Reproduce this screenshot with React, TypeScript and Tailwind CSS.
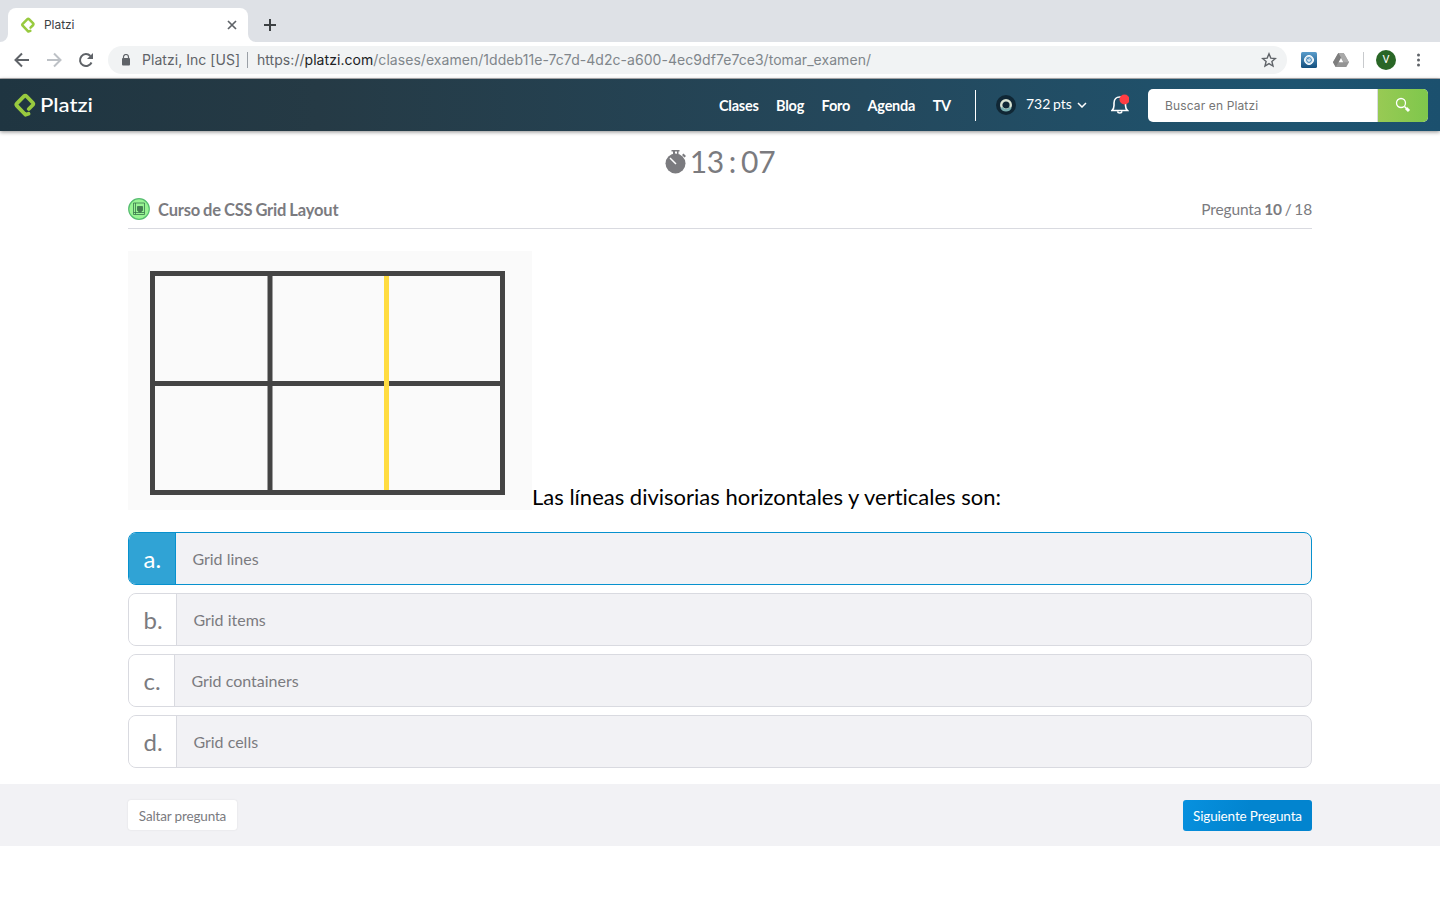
import type { ReactNode } from 'react';

const Mark = ({ className }: { className: string }) => (
  <svg viewBox="0 0 22 24" className={className} fill="none" stroke="#98ca3f" strokeWidth="3.800" strokeLinecap="round" strokeLinejoin="round">
    <path d="M14.800 16 18.800 12Q19.800 10.800 18.800 9.700L12.500 3.200Q11.300 2 10.100 3.200L2.700 10.700Q1.900 11.600 2.700 12.600L11.500 21.800 14.500 20.800" />
  </svg>
);

const answers = [
  { key: 'a', text: 'Grid lines', box: 'w-[47px]', selected: true },
  { key: 'b', text: 'Grid items', box: 'w-[48px]', selected: false },
  { key: 'c', text: 'Grid containers', box: 'w-[46px]', selected: false },
  { key: 'd', text: 'Grid cells', box: 'w-[48px]', selected: false },
];

function NavItem({ children }: { children: ReactNode }) {
  return <a className="whitespace-nowrap">{children}</a>;
}

function Browser() {
  return (
    <header className="h-[79px] border-b border-[#b5b3b6] bg-white font-[Inter,sans-serif]">
      <div className="flex h-[42px] bg-[#dee1e6] pl-2 pt-2">
        <div className="relative flex h-[34px] w-60 items-center rounded-t-lg bg-white pl-3 pr-2.5">
          <svg viewBox="0 0 8 8" className="absolute -left-2 bottom-0 size-2" fill="white"><path d="M8 0v8H0a8 8 0 0 0 8-8" /></svg>
          <svg viewBox="0 0 8 8" className="absolute -right-2 bottom-0 size-2" fill="white"><path d="M0 0v8h8a8 8 0 0 1-8-8" /></svg>
          <Mark className="h-4 w-4" />
          <span className="ml-2 flex-1 text-[12px] tracking-[-0.05px] text-[#3c4043]">Platzi</span>
          <svg viewBox="0 0 12 12" className="size-3" stroke="#5f6368" strokeWidth="1.7"><path d="m2 2 8 8M10 2 2 10" /></svg>
        </div>
        <svg viewBox="0 0 14 14" className="ml-[15px] mt-2.5 size-3.5" stroke="#3c4043" strokeWidth="2"><path d="M7 1v12M1 7h12" /></svg>
      </div>
      <div className="flex h-9 items-center pl-3.5">
        <svg viewBox="0 0 16 16" className="size-4" fill="none" stroke="#5f6368" strokeWidth="2"><path d="M15 8H2M8 1.500 1.500 8 8 14.500" /></svg>
        <svg viewBox="0 0 16 16" className="ml-4 size-4" fill="none" stroke="#bdc1c6" strokeWidth="2"><path d="M1 8h13M8 1.500 14.500 8 8 14.500" /></svg>
        <svg viewBox="0 0 16 16" className="ml-4 size-4" fill="none" stroke="#5f6368" strokeWidth="2"><path d="M13.500 10.500A6 6 0 1 1 12.400 4" /><path d="M15 1v6H9z" fill="#5f6368" stroke="none" /></svg>
        <div className="ml-3.5 flex h-7 w-[1179px] items-center rounded-full bg-[#f1f3f4] pl-[13px] text-[14px]">
          <svg viewBox="0 0 10 12" className="h-3 w-2.5"><path d="M2.500 5V3a2.500 2.500 0 0 1 5 0v2" fill="none" stroke="#5f6368" strokeWidth="1.200" /><rect x="1" y="4" width="8" height="7.500" rx="1" fill="#5f6368" /></svg>
          <svg viewBox="0 0 105 20" className="ml-[11px] h-5 w-[105px]"><text y="15" textLength="98" fontSize="14" fill="#5f6368">Platzi, Inc [US]</text></svg>
          <span className="h-4 w-px bg-[#9aa0a6]" />
          <svg viewBox="0 0 640 20" className="ml-[9px] h-5 w-[640px]"><text y="15" textLength="614" fontSize="14" fill="#80868b"><tspan fill="#5f6368">https://</tspan><tspan fill="#202124">platzi.com</tspan>/clases/examen/1ddeb11e-7c7d-4d2c-a600-4ec9df7e7ce3/tomar_examen/</text></svg>
          <svg viewBox="0 0 16 16" className="ml-auto mr-2.5 size-4" fill="none" stroke="#5f6368" strokeWidth="1.400"><path d="m8 1.800 1.800 4.300 4.600.400-3.500 3 1.100 4.600-4-2.500-4 2.500 1.100-4.600-3.500-3 4.600-.400z" /></svg>
        </div>
        <svg viewBox="0 0 16 16" className="ml-3.5 size-4"><defs><linearGradient id="ext" x2="0" y2="1"><stop stopColor="#5a9dcc" /><stop offset="1" stopColor="#134f7e" /></linearGradient></defs><rect width="16" height="16" rx="1.500" fill="url(#ext)" /><circle cx="8" cy="8" r="4.500" fill="#d9e9f4" stroke="#fff" /><circle cx="8" cy="8" r="2.400" fill="none" stroke="#2d78b0" strokeWidth=".9" /><path d="m6 5.500 2 2" stroke="#2d78b0" /></svg>
        <svg viewBox="0 0 16 14" className="ml-4 h-3.5 w-4"><path d="M5.300 0h5.400L16 9.200l-2.700 4.800H2.700L0 9.200z" fill="#949494" /><path d="M10.700 0 16 9.200h-5.200L5.300 0z" fill="#a9a9a9" /><path d="m5.300 0-5.300 9.200L2.700 14 8 4.700z" fill="#7d7d7d" /><path d="m8 5 2.300 4.200H5.700z" fill="#fff" /></svg>
        <span className="ml-[14px] h-4 w-px bg-[#c8cacd]" />
        <span className="ml-3 flex size-5 items-center justify-center rounded-full bg-[#296626] font-[Roboto,sans-serif] text-[11px] text-white">V</span>
        <svg viewBox="0 0 4 14" className="ml-5 h-3.5 w-1" fill="#5f6368"><circle cx="2.500" cy="2" r="1.500" /><circle cx="2.500" cy="7" r="1.500" /><circle cx="2.500" cy="12" r="1.500" /></svg>
      </div>
    </header>
  );
}

function Navbar() {
  return (
    <nav className="relative flex h-[52px] items-center bg-[linear-gradient(90deg,#1f3541_0%,#253a45_22%,#24485c_60%,#1e5470_90%,#1b506e_100%)] pl-3.5 text-white shadow-[0_1px_4px_rgba(0,0,0,0.45)]">
      <Mark className="h-6 w-[22px]" />
      <svg viewBox="0 0 54 24" className="ml-1 h-6 w-[54px]"><text x="0" y="19" textLength="53" lengthAdjust="spacingAndGlyphs" fill="white" fontFamily="Lato, sans-serif" fontWeight="500" fontSize="20">Platzi</text></svg>
      <div className="ml-[625px] flex w-[232px] justify-between pt-0.5 text-[14.500px] font-bold tracking-[-0.25px]">
        <NavItem>Clases</NavItem><NavItem>Blog</NavItem><NavItem>Foro</NavItem><NavItem>Agenda</NavItem><NavItem>TV</NavItem>
      </div>
      <span className="ml-6 h-[31px] w-px bg-white" />
      <svg viewBox="0 0 20 20" className="ml-5 size-5"><circle cx="10" cy="10" r="10" fill="#102735" /><circle cx="10" cy="10" r="4.800" fill="none" stroke="#d9e3d2" strokeWidth="2.400" /><path d="M5.500 12.500A5 5 0 0 0 14.500 12.500" fill="none" stroke="#78afb0" strokeWidth="2.500" /></svg>
      <span className="-mt-1 ml-2.5 w-[47px] whitespace-nowrap text-[14px] [word-spacing:-1px]">732 pts</span>
      <svg viewBox="0 0 10 6" className="ml-1 h-1.5 w-2.5" fill="none" stroke="white" strokeWidth="1.500"><path d="m1 1 4 4 4-4" /></svg>
      <svg viewBox="0 0 18 20" className="-mt-0.5 ml-6 h-5 w-[18px]" fill="none" stroke="white" strokeWidth="1.600"><path d="M1 16.500h15.500c-1.500-1.500-2-2.500-2-5V9c0-4-2.500-6-5.800-6S3 5 3 9v2.500c0 2.500-.500 3.500-2 5zM6.500 17.500c.5 2 4 2 4.500 0" /><circle cx="13.500" cy="5.500" r="5" fill="#ff3d43" stroke="none" /></svg>
      <div className="ml-[19px] flex h-[33px] w-[280px] overflow-hidden rounded-[5px] bg-white">
        <span className="flex flex-1 items-center pl-[17px] pt-px font-[Inter,sans-serif] text-[12px] tracking-[0.13px] text-[#757575]">Buscar en Platzi</span>
        <span className="flex w-[51px] items-center justify-center border-l border-[#d9dce2] bg-[linear-gradient(90deg,#98ca54,#7fc74c)]">
          <svg viewBox="0 0 16 16" className="size-4" fill="none" stroke="white"><circle cx="6" cy="6" r="4.500" strokeWidth="1.300" /><path d="m9.500 9.500 1.500 1.500" strokeWidth="1.500" /><path d="m11 11 3 3" strokeWidth="3" /></svg>
        </span>
      </div>
    </nav>
  );
}

export default function App() {
  return (
    <div className="h-[900px] overflow-hidden bg-white font-[Lato,sans-serif] [font-variant-ligatures:none]">
      <Browser />
      <Navbar />
      <main className="h-[653px] px-32 text-[#7b7b7f]">
        <div className="flex h-[62px] items-center justify-center">
          <svg viewBox="0 0 22 26" className="h-[26px] w-[22px]" fill="#7b7b7f"><circle cx="10.500" cy="14.500" r="10" /><path d="M6.500 1h8v1.500h-1V5h-1.500V2.500h-2V5H8V2.500H6.500zM17 6l1.500-1.500 2.500 2.500-1.500 1.500z" /><path d="m5 9 6 6" stroke="white" strokeWidth="1.500" /></svg>
          <span className="-mt-[3px] ml-[3px] whitespace-pre text-[30px] leading-none tracking-[-0.25px] [word-spacing:-2.500px]">13 : 07</span>
        </div>
        <div className="flex h-9 items-center border-b border-[#d9dae0]">
          <svg viewBox="0 0 22 22" className="-mt-1 size-[22px]"><circle cx="11" cy="11" r="10.300" fill="#98f493" stroke="#56bd70" strokeWidth="1.200" /><g fill="none" stroke="#39764d" strokeWidth=".8"><path d="M5.500 5h11v11.500h-11zM7.500 5v11.500M5.500 14.500h11" /><path d="M9.500 8.500h5v4l-2.500 2-2.500-2z" fill="#477b52" /></g></svg>
          <h1 className="ml-2 text-[16.500px] font-bold tracking-[-0.17px] [word-spacing:-0.850px]">Curso de CSS Grid Layout</h1>
          <p className="-mt-0.5 ml-auto text-[15.500px] tracking-[-0.15px] [word-spacing:-1px]">Pregunta <b>10</b> / 18</p>
        </div>
        <div className="mt-[22px] flex h-[259px] items-end">
          <svg viewBox="0 0 404 259" className="h-[259px] w-[404px]"><path fill="#fafafa" d="M0 0h404v259H0z" /><path d="M24.500 22.500h350v219h-350zM142 20v222M22 132.500h353" fill="none" stroke="#444" strokeWidth="5" /><path d="M258.500 25v214" stroke="#ffdc40" strokeWidth="5" /></svg>
          <h2 className="whitespace-nowrap text-[22px] leading-[27px] text-black">Las líneas divisorias horizontales y verticales son:</h2>
        </div>
        <div className="mt-[22px] flex flex-col gap-2">
          {answers.map((answer) => (
            <div key={answer.key} className={`flex h-[53px] overflow-hidden rounded-lg border bg-[#f2f2f5] ${answer.selected ? 'border-[#0791ce]' : 'border-[#d9dae0]'}`}>
              <span className={`flex h-full items-center border-r pl-[14.500px] text-[24px] ${answer.box} ${answer.selected ? 'border-[#0791ce] bg-[#30a3d5] text-white' : 'border-[#d9dae0] bg-white'}`}>{answer.key}.</span>
              <span className="flex items-center pl-[16.400px] text-[16px]">{answer.text}</span>
            </div>
          ))}
        </div>
      </main>
      <footer className="flex h-[62px] items-center justify-between bg-[#f2f2f5] px-32 text-[13.500px] tracking-[-0.15px] [word-spacing:-0.500px]">
        <button className="h-[30px] w-[109px] whitespace-nowrap rounded-[3px] bg-white pt-0.5 text-[#7b7b7f] shadow-[0_0_2px_rgba(0,0,0,0.1)]">Saltar pregunta</button>
        <button className="h-[31px] w-[129px] whitespace-nowrap rounded-[3px] bg-[linear-gradient(110deg,#0791df,#0284cf_50%)] pt-0.5 text-white">Siguiente Pregunta</button>
      </footer>
    </div>
  );
}
